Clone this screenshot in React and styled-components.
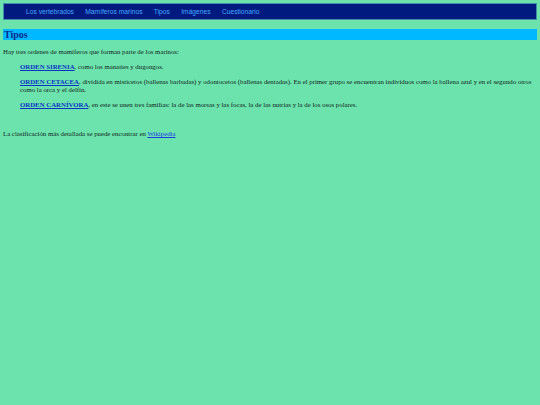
import React from 'react'
import styled, { createGlobalStyle } from 'styled-components'

const Global = createGlobalStyle`
    html, body {
        margin: 0;
        padding: 0;
        background: #6ce3ad;
    }
    body {
        font-family: "Liberation Serif", "Times New Roman", serif;
        color: #10241a;
    }
`

const Page = styled.div`
    padding: 3px 3px 0 3px;
    min-height: 402px;
`

const Nav = styled.nav`
    height: 15px;
    background: #001a80;
    border: 1px solid #3f8fa8;
    display: flex;
    align-items: center;
    gap: 11.3px;
    padding-left: 22px;
`

const NavLink = styled.a`
    font-family: "Liberation Sans", Arial, sans-serif;
    font-size: 6.7px;
    color: #4aa8ff;
    text-decoration: none;
`

const Heading = styled.h1`
    margin: 9px 0 0 0;
    height: 11px;
    line-height: 11px;
    background: #00b8ff;
    color: #0b2a8c;
    font-size: 10px;
    font-weight: bold;
    padding-left: 1px;
`

const Text = styled.p`
    margin: 8px 0 0 0;
    font-size: 6.8px;
    line-height: 8px;
`

const List = styled.div`
    padding-left: 17px;
`

const Item = styled.p`
    margin: 7px 0 0 0;
    font-size: 6.8px;
    line-height: 8px;
`

const Order = styled.a`
    color: #0b33c8;
    font-weight: bold;
    text-decoration: underline;
`

const Footer = styled.p`
    margin: 21px 0 0 0;
    font-size: 6.8px;
    line-height: 8px;
`

const Link = styled.a`
    color: #1a3ce0;
    text-decoration: underline;
`

const links = ['Los vertebrados', 'Mamíferos marinos', 'Tipos', 'Imágenes', 'Cuestionario']

export default function App() {
    return (
        <Page>
            <Global />
            <Nav>
                {links.map((l) => (
                    <NavLink key={l} href="#">{l}</NavLink>
                ))}
            </Nav>
            <Heading>Tipos</Heading>
            <Text>Hay tres ordenes de mamíferos que forman parte de los marinos:</Text>
            <List>
                <Item>
                    <Order href="#">ORDEN SIRENIA</Order>, como los manatíes y dugongos.
                </Item>
                <Item>
                    <Order href="#">ORDEN CETACEA</Order>, dividida en misticetos (ballenas barbadas) y odontocetos (ballenas dentadas). En el primer grupo se encuentran individuos como la ballena azul y en el segundo otros como la orca y el delfín.
                </Item>
                <Item>
                    <Order href="#">ORDEN CARNÍVORA</Order>, en este se unen tres familias: la de las morsas y las focas, la de las nutrias y la de los osos polares.
                </Item>
            </List>
            <Footer>
                La clasificación más detallada se puede encontrar en <Link href="#">Wikipedia</Link>
            </Footer>
        </Page>
    )
}
